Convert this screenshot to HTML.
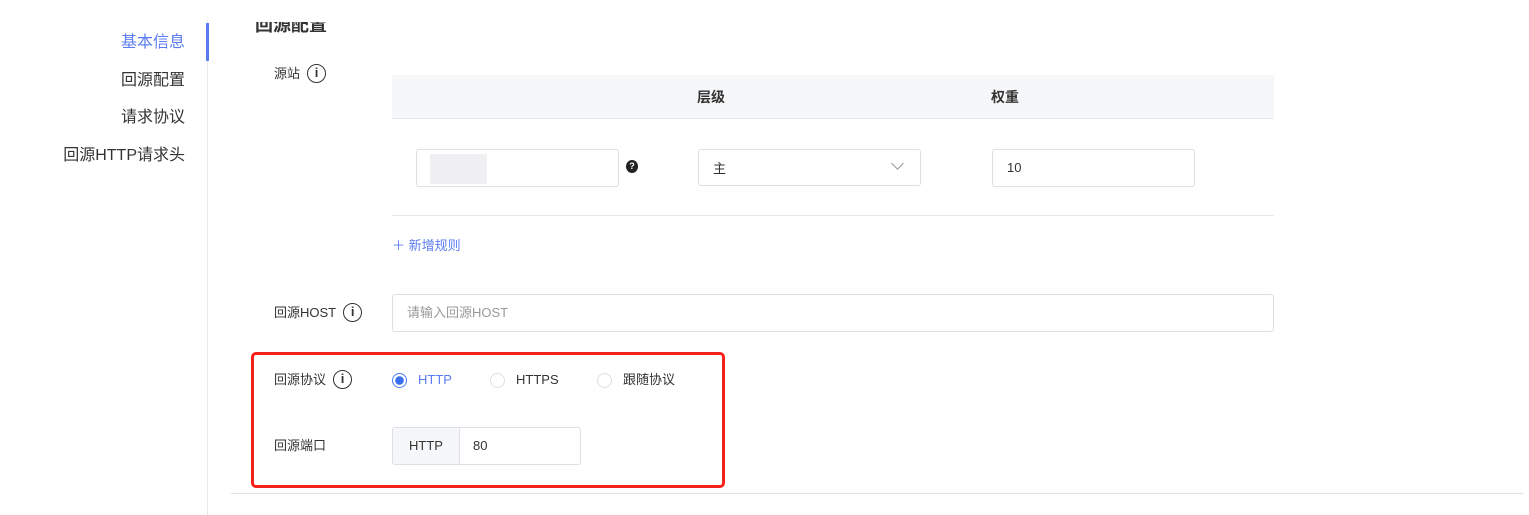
<!DOCTYPE html>
<html><head><meta charset="utf-8"><style>
*{margin:0;padding:0;box-sizing:border-box}
body{width:1529px;height:515px;background:#fff;position:relative;overflow:hidden;font-family:"Liberation Sans","Noto Sans CJK SC",sans-serif;color:#333;font-size:14px}
.a{position:absolute;line-height:20px}
.nav{font-size:16px;color:#333;text-align:right;width:185px;left:0}
.lbl{font-size:13px;color:#333}
.info{display:inline-block;width:19px;height:19px;border:1.5px solid #333;border-radius:50%;font:bold 13px/16px "Liberation Sans",sans-serif;text-align:center;vertical-align:middle;margin-left:7px;margin-top:-3px}
.inp{border:1px solid #dcdfe6;border-radius:3px;background:#fff}
.radio{width:15px;height:15px;border:1px solid #dcdfe6;border-radius:50%}
</style></head><body>
<div class="a nav" style="top:33px;color:#5b7cf0">基本信息</div>
<div class="a nav" style="top:71px">回源配置</div>
<div class="a nav" style="top:108px">请求协议</div>
<div class="a nav" style="top:146px">回源HTTP请求头</div>
<div class="a" style="left:207px;top:20px;width:1px;height:495px;background:#e8e8e8"></div>
<div class="a" style="left:206px;top:23px;width:3px;height:38px;background:#5b7cf0"></div>
<div class="a" style="left:255px;top:22px;height:12px;overflow:hidden;width:100px"><div style="font-size:18px;font-weight:bold;margin-top:-9px;line-height:24px">回源配置</div></div>

<div class="a lbl" style="left:274px;top:64px">源站<span class="info">i</span></div>
<div class="a" style="left:392px;top:75px;width:882px;height:44px;background:#f6f7f9;border-bottom:1px solid #e6e8ee"></div>
<div class="a" style="left:697px;top:87px;font-size:14px;font-weight:bold">层级</div>
<div class="a" style="left:991px;top:87px;font-size:14px;font-weight:bold">权重</div>
<div class="a inp" style="left:416px;top:149px;width:203px;height:38px"></div>
<div class="a" style="left:430px;top:154px;width:57px;height:30px;background:#f0f0f2"></div>
<div class="a" style="left:626px;top:160px;width:12px;height:13px;border-radius:50%;background:#222;color:#fff;font-size:9px;font-weight:bold;text-align:center;line-height:13px">?</div>
<div class="a inp" style="left:698px;top:149px;width:223px;height:37px"></div>
<div class="a" style="left:713px;top:159px;font-size:13px">主</div>
<div class="a" style="left:893px;top:159px;width:9px;height:9px;border-right:1px solid #999;border-bottom:1px solid #999;transform:rotate(45deg)"></div>
<div class="a inp" style="left:992px;top:149px;width:203px;height:38px"></div>
<div class="a" style="left:1007px;top:158px;font-size:13px">10</div>
<div class="a" style="left:392px;top:215px;width:882px;height:1px;background:#e6e8ee"></div>
<div class="a" style="left:392px;top:236px;font-size:13px;color:#5b7cf0">＋ 新增规则</div>

<div class="a lbl" style="left:274px;top:303px">回源HOST<span class="info">i</span></div>
<div class="a inp" style="left:392px;top:294px;width:882px;height:38px"></div>
<div class="a" style="left:407px;top:303px;font-size:13px;color:#999">请输入回源HOST</div>

<div class="a" style="left:251px;top:352px;width:474px;height:136px;border:3px solid #f5221b;border-radius:5px"></div>
<div class="a lbl" style="left:274px;top:370px">回源协议<span class="info">i</span></div>
<div class="a radio" style="left:392px;top:373px;border:1px solid #4a7cf0;background:radial-gradient(circle,#3b6ff0 0 4px,#fff 4.5px)"></div>
<div class="a" style="left:418px;top:370px;font-size:13px;color:#5b7cf0">HTTP</div>
<div class="a radio" style="left:490px;top:373px"></div>
<div class="a" style="left:516px;top:370px;font-size:13px">HTTPS</div>
<div class="a radio" style="left:597px;top:373px"></div>
<div class="a" style="left:623px;top:370px;font-size:13px">跟随协议</div>
<div class="a lbl" style="left:274px;top:436px">回源端口</div>
<div class="a inp" style="left:392px;top:427px;width:189px;height:38px;overflow:hidden"><div style="width:67px;height:100%;background:#f6f7f9;border-right:1px solid #dcdfe6;text-align:center;line-height:36px;font-size:13px">HTTP</div></div>
<div class="a" style="left:473px;top:436px;font-size:13px">80</div>
<div class="a" style="left:231px;top:493px;width:1292px;height:1px;background:#e0e0e0"></div>
</body></html>
